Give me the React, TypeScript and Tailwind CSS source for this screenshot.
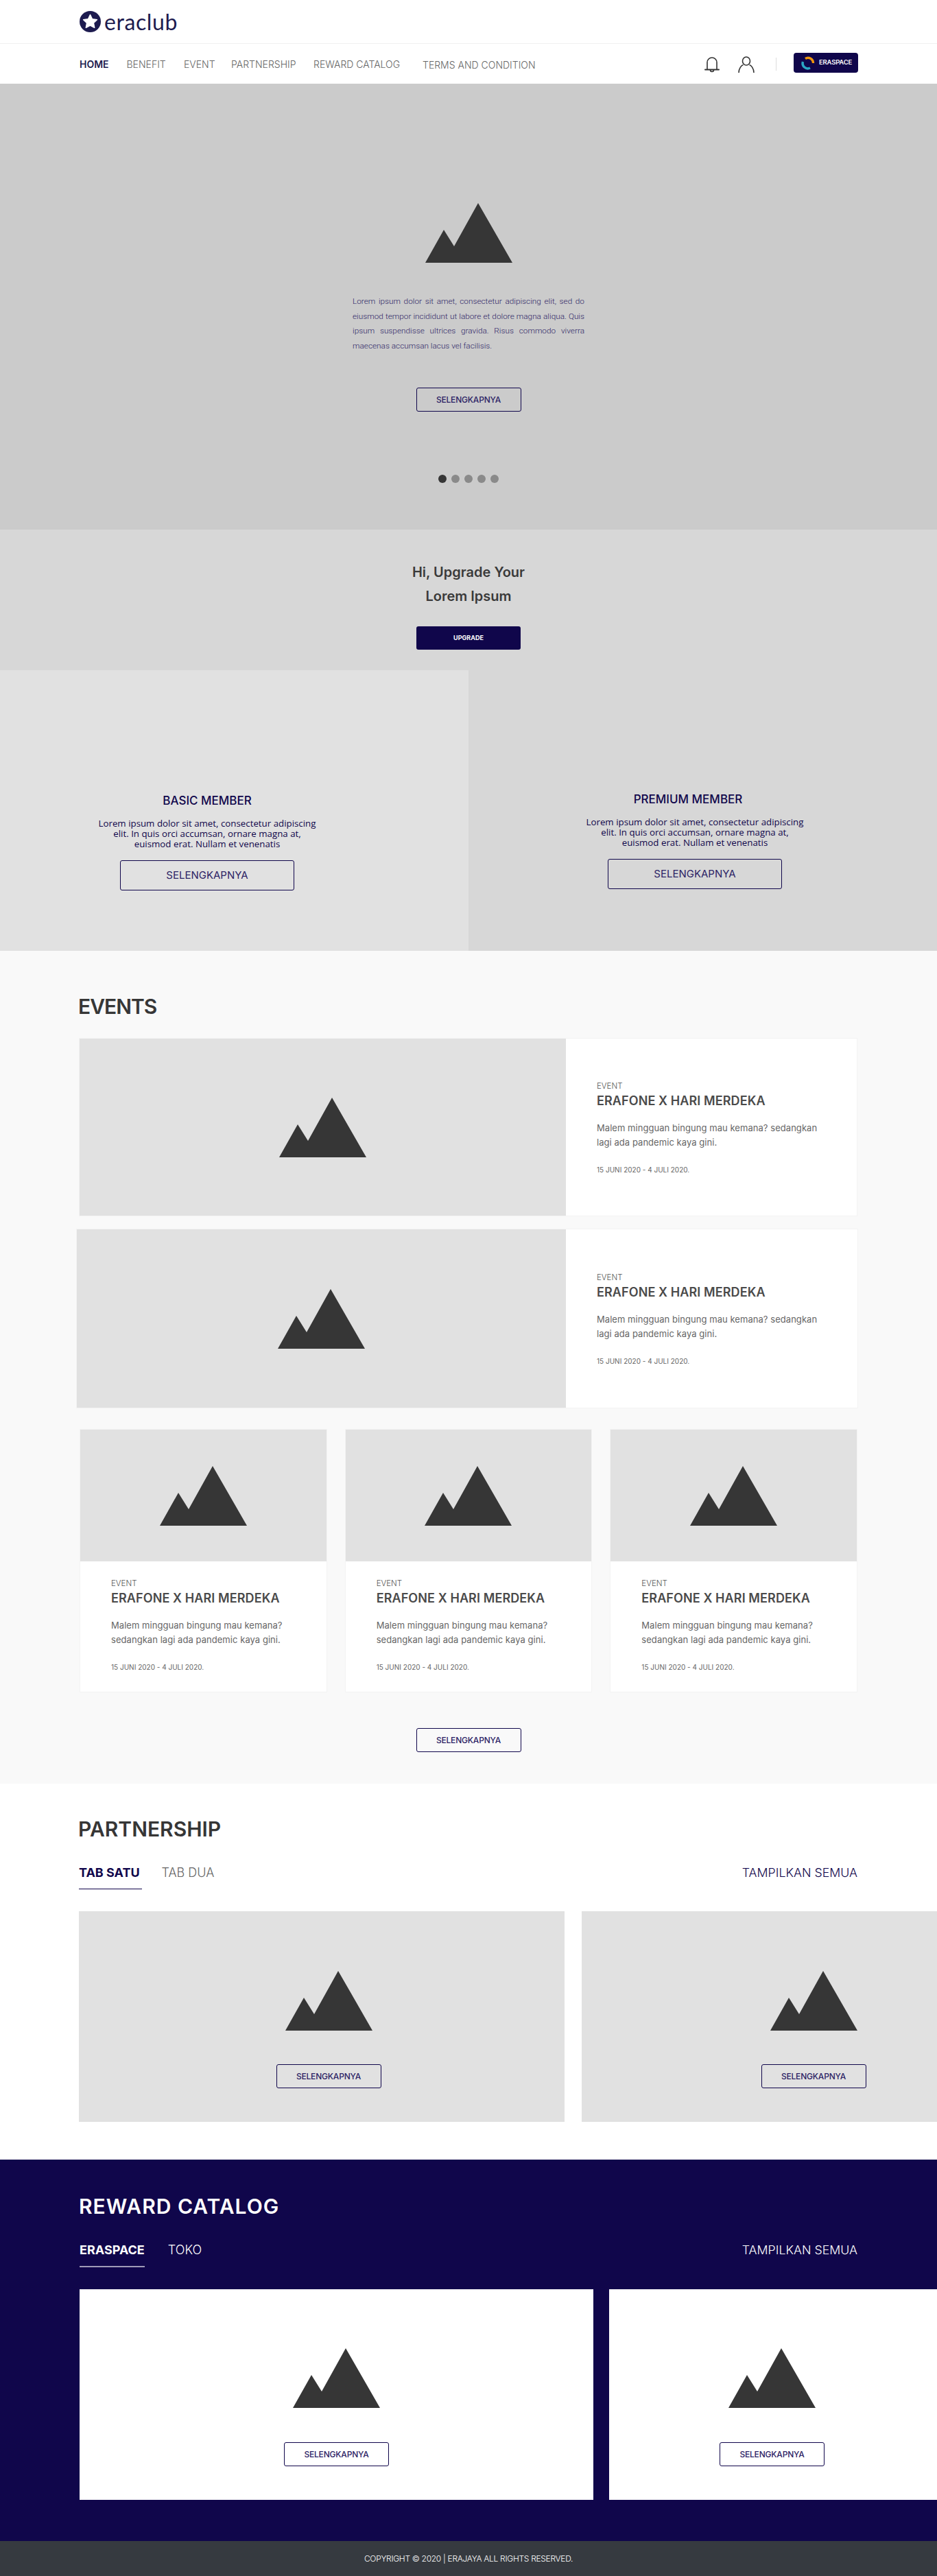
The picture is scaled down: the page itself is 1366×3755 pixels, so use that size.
import { ReactNode } from "react";

const sans = "font-['Inter',sans-serif]";

function Mountain() {
  return (
    <svg width="127" height="87" viewBox="0 0 127 87" className="block shrink-0">
      <path d="M0 87 27 39 42 63 77 0 127 87Z" fill="#363636" />
    </svg>
  );
}

function OutlineButton({ children, className = "" }: { children: ReactNode; className?: string }) {
  return (
    <button className={`block border border-[#10064b] rounded-[3px] text-[#2d2466] font-['Inter',sans-serif] font-medium ${className}`}>
      {children}
    </button>
  );
}

function SmallButton() {
  return <OutlineButton className="w-[153px] h-[35px] text-[12px] tracking-[-0.2px]">SELENGKAPNYA</OutlineButton>;
}

function EventText() {
  return (
    <>
      <p className="text-[11.5px] leading-4 text-[#555] font-light">EVENT</p>
      <h3 className="mt-[2px] text-[18px] leading-6 font-semibold text-[#4a4a4a] tracking-[0.1px]">ERAFONE X HARI MERDEKA</h3>
      <p className="mt-[17px] text-[13px] leading-[21px] text-[#666] tracking-[0.05px]">
        Malem mingguan bingung mau kemana? sedangkan lagi ada pandemic kaya gini.
      </p>
      <p className="mt-[22px] text-[10px] leading-[14px] text-[#666]">15 JUNI 2020 - 4 JULI 2020.</p>
    </>
  );
}

function Header() {
  return (
    <header className="bg-white">
      <div className="h-[64px] border-b border-[#f0f0f0] pl-[116px] flex items-center">
        <svg width="31" height="31" viewBox="0 0 31 31" className="-mt-[1px] shrink-0">
          <circle cx="15.5" cy="15.5" r="15.5" fill="#1d1b4f" />
          <path
            d="M15.5 5.5l3 6.3 6.9.9-5 4.8 1.3 6.8-6.2-3.3-6.2 3.3 1.3-6.8-5-4.8 6.9-.9z"
            fill="#fff"
            stroke="#fff"
            strokeWidth="1.5"
            strokeLinejoin="round"
          />
        </svg>
        <span className="ml-[5px] text-[32px] leading-none font-['Lato',sans-serif] text-[#1d1b4f] tracking-[0.6px]">eraclub</span>
      </div>
      <nav className={`h-[58px] flex items-center pl-[116px] text-[14px] font-light text-[#666] ${sans}`}>
        <a className="w-[68.5px] font-semibold text-[#1d1b4f]">HOME</a>
        <a className="w-[83.5px]">BENEFIT</a>
        <a className="w-[69px]">EVENT</a>
        <a className="w-[120px]">PARTNERSHIP</a>
        <a className="w-[159px]">REWARD CATALOG</a>
        <a className="w-[411px] pt-[2px]">TERMS AND CONDITION</a>
        <svg width="22" height="24" viewBox="0 0 22 24" fill="none" stroke="#333" strokeWidth="1.6" className="mt-[1px]">
          <path d="M4 19V9a7 7 0 0 1 14 0v10" />
          <path d="M1 19.5h20" strokeWidth="2" strokeLinecap="round" />
          <path d="M8.500 20a2.500 2.500 0 0 0 5 0" />
        </svg>
        <svg width="24" height="24" viewBox="0 0 24 24" fill="none" stroke="#333" strokeWidth="1.6" className="ml-[27px] mt-[1px]">
          <ellipse cx="12" cy="7" rx="5.500" ry="6" />
          <path d="M1 24c0-6 4-11 6.500-11.500M23 24c0-6-4-11-6.500-11.500" />
        </svg>
        <span className="ml-[31px] w-px h-[19px] bg-[#ddd]" />
        <a className="ml-[25px] w-[94px] h-[29px] -mt-[3px] bg-[#10064b] rounded-[4px] flex items-center pl-[11px]">
          <svg width="20" height="24" viewBox="0 0 20 24" fill="none" strokeWidth="3.5">
            <path d="M6 5.500a7.500 7.500 0 0 1 11.500 6.500" stroke="#f0960e" />
            <path d="M2.500 10a7.500 7.500 0 0 0 10.500 9" stroke="#2aa6c4" />
          </svg>
          <span className="ml-[6px] text-[9.5px] font-semibold text-white tracking-[-0.2px]">ERASPACE</span>
        </a>
      </nav>
    </header>
  );
}

function Hero() {
  return (
    <section className="h-[650px] bg-[#cbcbcb] flex flex-col items-center pt-[174px]">
      <Mountain />
      <p className="mt-[46px] w-[338px] text-[11.8px] leading-[21.5px] font-light text-[#2d2466] text-justify font-['Roboto',sans-serif]">
        Lorem ipsum dolor sit amet, consectetur adipiscing elit, sed do eiusmod tempor incididunt ut labore et dolore magna aliqua. Quis ipsum suspendisse ultrices gravida. Risus commodo viverra maecenas accumsan lacus vel facilisis.
      </p>
      <div className="mt-[50px]"><SmallButton /></div>
      <div className="mt-[92px] flex gap-[7.500px]">
        <span className="w-[11.500px] h-[11.500px] rounded-full bg-[#363636]" />
        <span className="w-[11.500px] h-[11.500px] rounded-full bg-[#8a8a8a]" />
        <span className="w-[11.500px] h-[11.500px] rounded-full bg-[#8a8a8a]" />
        <span className="w-[11.500px] h-[11.500px] rounded-full bg-[#8a8a8a]" />
        <span className="w-[11.500px] h-[11.500px] rounded-full bg-[#8a8a8a]" />
      </div>
    </section>
  );
}

function Upgrade() {
  return (
    <section className="h-[205px] bg-[#d7d7d7] flex flex-col items-center pt-[45px]">
      <h2 className="text-[20px] leading-[35px] font-semibold text-[#3a3a3a] text-center">
        Hi, Upgrade Your
        <br />
        Lorem Ipsum
      </h2>
      <button className="mt-[26px] w-[152px] h-[34px] rounded-[3px] bg-[#10064b] text-white text-[9px] font-bold">UPGRADE</button>
    </section>
  );
}

function Member({ title, shift }: { title: string; shift: string }) {
  return (
    <div className="h-[409px] flex flex-col items-center">
      <div className="h-[178px]" />
      <h3 className={`${shift} text-[17px] leading-6 font-medium text-[#10064b]`}>{title}</h3>
      <p className="mt-[14px] w-[330px] text-[13.3px] leading-[15px] text-center text-[#10064b] font-['Open_Sans',sans-serif]">
        Lorem ipsum dolor sit amet, consectetur adipiscing
        <br />
        elit. In quis orci accumsan, ornare magna at,
        <br />
        euismod erat. Nullam et venenatis
      </p>
      <OutlineButton className="mt-[16px] w-[254px] h-[44px] text-[15px] font-normal">SELENGKAPNYA</OutlineButton>
    </div>
  );
}

function Members() {
  return (
    <section className="grid grid-cols-2">
      <div className="bg-[#e1e1e1] pr-[79px]">
        <Member title="BASIC MEMBER" shift="" />
      </div>
      <div className="bg-[#d7d7d7] pr-[23px]">
        <Member title="PREMIUM MEMBER" shift="-ml-[20px] -mt-[2px]" />
      </div>
    </section>
  );
}

function Events() {
  return (
    <section className={`bg-[#f9f9f9] pt-[63px] pb-[46px] pl-[115px] pr-[116px] ${sans}`}>
      <h2 className="-ml-px text-[30px] leading-9 font-semibold text-[#363636] tracking-[-1px]">EVENTS</h2>
      <article className="mt-[28px] h-[260px] flex bg-white border border-[#f3f3f3]">
        <div className="w-[709px] bg-[#e1e1e1] flex items-center justify-center"><Mountain /></div>
        <div className="flex-1 pl-[45px] pr-[42px] flex flex-col justify-center"><EventText /></div>
      </article>
      <article className="mt-[18px] -ml-[4px] -mr-[1px] h-[262px] flex bg-white border border-[#f3f3f3]">
        <div className="w-[713px] bg-[#e1e1e1] flex items-center justify-center"><Mountain /></div>
        <div className="flex-1 pl-[45px] pr-[42px] flex flex-col justify-center"><EventText /></div>
      </article>
      <div className="mt-[30px] ml-px grid grid-cols-3 gap-[26px]">
        {[0, 1, 2].map((i) => (
          <article key={i} className="h-[384px] bg-white border border-[#f3f3f3]">
            <div className="h-[192px] bg-[#e1e1e1] flex items-center justify-center"><Mountain /></div>
            <div className="pt-[24px] pl-[45px] pr-[30px]"><EventText /></div>
          </article>
        ))}
      </div>
      <div className="mt-[52px] flex justify-center -mr-[1px]"><SmallButton /></div>
    </section>
  );
}

function Tabs({ first, second, dark }: { first: string; second: string; dark?: boolean }) {
  return (
    <div className="flex items-start justify-between">
      <div className="flex">
        <a className={`${dark ? "text-white border-b-2 border-[#a09bb8]" : "text-[#10064b] border-b border-[#10064b] pr-[3px]"} pb-[11px] text-[18px] leading-6 font-bold`}>
          {first}
        </a>
        <a className={`${dark ? "ml-[34px] text-white" : "ml-[29px] text-[#666]"} text-[18px] leading-6 font-light`}>{second}</a>
      </div>
      <a className={`${dark ? "text-white" : "text-[#10064b]"} text-[17.8px] leading-6 font-light`}>TAMPILKAN SEMUA</a>
    </div>
  );
}

function Partnership() {
  return (
    <section className={`bg-white pt-[48px] pb-[55px] pl-[115px] pr-[116px] overflow-hidden ${sans}`}>
      <h2 className="-ml-px text-[30px] leading-9 font-semibold text-[#363636]">PARTNERSHIP</h2>
      <div className="mt-[34px]"><Tabs first="TAB SATU" second="TAB DUA" /></div>
      <div className="mt-[32px] flex gap-[25px] w-[1500px]">
        <div className="w-[708px] h-[307px] bg-[#e1e1e1] flex flex-col items-center pt-[87px] pl-[20px]">
          <Mountain />
          <div className="mt-[49px]"><SmallButton /></div>
        </div>
        <div className="w-[676px] h-[307px] bg-[#e1e1e1] flex flex-col items-center pt-[87px]">
          <Mountain />
          <div className="mt-[49px]"><SmallButton /></div>
        </div>
      </div>
    </section>
  );
}

function Reward() {
  return (
    <section className={`bg-[#10064b] pt-[50px] pb-[60px] pl-[116px] pr-[116px] overflow-hidden ${sans}`}>
      <h2 className="-ml-px text-[30px] leading-9 font-semibold text-white tracking-[1px]">REWARD CATALOG</h2>
      <div className="mt-[34px]"><Tabs first="ERASPACE" second="TOKO" dark /></div>
      <div className="mt-[32px] flex gap-[23px] w-[1500px]">
        <div className="w-[749px] h-[307px] bg-white flex flex-col items-center pt-[86px]">
          <Mountain />
          <div className="mt-[50px]"><SmallButton /></div>
        </div>
        <div className="w-[478px] h-[307px] bg-white flex flex-col items-center pt-[86px] pr-[3px]">
          <Mountain />
          <div className="mt-[50px]"><SmallButton /></div>
        </div>
      </div>
    </section>
  );
}

export default function App() {
  return (
    <main className={`w-[1366px] overflow-hidden ${sans}`}>
      <Header />
      <Hero />
      <Upgrade />
      <Members />
      <Events />
      <Partnership />
      <Reward />
      <footer className="h-[51px] bg-[#363a40] flex items-center justify-center text-[12px] font-light text-white tracking-[-0.3px]">
        COPYRIGHT © 2020 | ERAJAYA ALL RIGHTS RESERVED.
      </footer>
    </main>
  );
}
